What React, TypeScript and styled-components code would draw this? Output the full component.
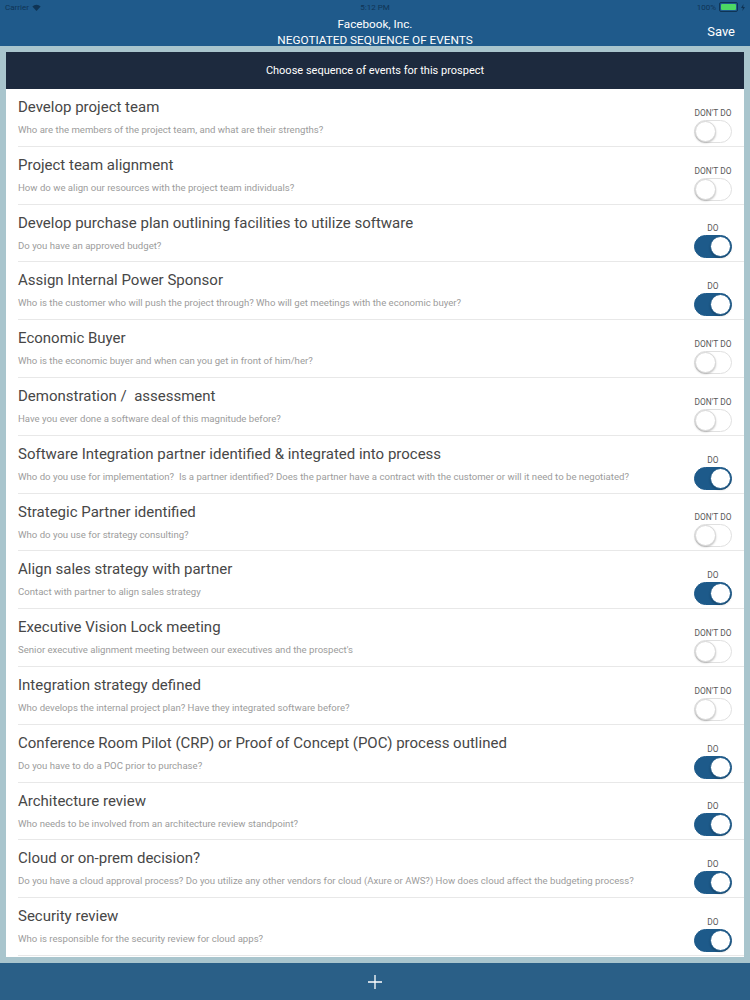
import React, { useState } from 'react';
import styled, { createGlobalStyle } from 'styled-components';

interface IEvent {
  id: number;
  title: string;
  detail: string;
  doIt: boolean;
}

const initialEvents: IEvent[] = [
  { id: 1, title: 'Develop project team', detail: 'Who are the members of the project team, and what are their strengths?', doIt: false },
  { id: 2, title: 'Project team alignment', detail: 'How do we align our resources with the project team individuals?', doIt: false },
  { id: 3, title: 'Develop purchase plan outlining facilities to utilize software', detail: 'Do you have an approved budget?', doIt: true },
  { id: 4, title: 'Assign Internal Power Sponsor', detail: 'Who is the customer who will push the project through? Who will get meetings with the economic buyer?', doIt: true },
  { id: 5, title: 'Economic Buyer', detail: 'Who is the economic buyer and when can you get in front of him/her?', doIt: false },
  { id: 6, title: 'Demonstration /  assessment', detail: 'Have you ever done a software deal of this magnitude before?', doIt: false },
  { id: 7, title: 'Software Integration partner identified & integrated into process', detail: 'Who do you use for implementation?  Is a partner identified? Does the partner have a contract with the customer or will it need to be negotiated?', doIt: true },
  { id: 8, title: 'Strategic Partner identified', detail: 'Who do you use for strategy consulting?', doIt: false },
  { id: 9, title: 'Align sales strategy with partner', detail: 'Contact with partner to align sales strategy', doIt: true },
  { id: 10, title: 'Executive Vision Lock meeting', detail: "Senior executive alignment meeting between our executives and the prospect's", doIt: false },
  { id: 11, title: 'Integration strategy defined', detail: 'Who develops the internal project plan? Have they integrated software before?', doIt: false },
  { id: 12, title: 'Conference Room Pilot (CRP) or Proof of Concept (POC) process outlined', detail: 'Do you have to do a POC prior to purchase?', doIt: true },
  { id: 13, title: 'Architecture review', detail: 'Who needs to be involved from an architecture review standpoint?', doIt: true },
  { id: 14, title: 'Cloud or on-prem decision?', detail: 'Do you have a cloud approval process? Do you utilize any other vendors for cloud (Axure or AWS?) How does cloud affect the budgeting process?', doIt: true },
  { id: 15, title: 'Security review', detail: 'Who is responsible for the security review for cloud apps?', doIt: true },
];

const App = () => {
  const [events, setEvents] = useState<IEvent[]>(initialEvents);

  const toggle = (id: number) => {
    setEvents((old) => old.map((ev) => (ev.id === id ? { ...ev, doIt: !ev.doIt } : ev)));
  };

  return (
    <>
      <GlobalStyle />
      <Page>
        <StatusBar>
          <StatusSide>
            Carrier
            <svg width="9" height="7" viewBox="0 0 12 9">
              <path d="M6 9 L0.5 3 A8 8 0 0 1 11.5 3 Z" fill="#0f3455" />
            </svg>
          </StatusSide>
          <StatusTime>5:12 PM</StatusTime>
          <StatusSide $right>
            100%
            <Battery>
              <BatteryFill />
            </Battery>
            <svg width="4" height="7" viewBox="0 0 4 7">
              <path d="M2.5 0 L0 4 H1.8 L1.4 7 L4 3 H2.2 Z" fill="#0f3455" />
            </svg>
          </StatusSide>
        </StatusBar>
        <NavBar>
          <NavTitle>
            <span>Facebook, Inc.</span>
            <span>NEGOTIATED SEQUENCE OF EVENTS</span>
          </NavTitle>
          <SaveBtn>Save</SaveBtn>
        </NavBar>
        <Frame>
          <Panel>
            <PanelHeader>Choose sequence of events for this prospect</PanelHeader>
            <List>
              {events.map((ev) => (
                <Row key={ev.id}>
                  <RowText>
                    <Title>{ev.title}</Title>
                    <Detail>{ev.detail}</Detail>
                  </RowText>
                  <SwitchCol>
                    <SwitchLabel>{ev.doIt ? 'DO' : "DON'T DO"}</SwitchLabel>
                    <Switch $on={ev.doIt} onClick={() => toggle(ev.id)}>
                      <Knob $on={ev.doIt} />
                    </Switch>
                  </SwitchCol>
                </Row>
              ))}
            </List>
          </Panel>
        </Frame>
        <BottomBar>
          <svg width="14" height="14" viewBox="0 0 14 14">
            <path d="M7 0 V14 M0 7 H14" stroke="#fff" strokeWidth="1.3" />
          </svg>
        </BottomBar>
      </Page>
    </>
  );
};

export default App;

const GlobalStyle = createGlobalStyle`
  html, body {
    margin: 0;
    padding: 0;
  }
  body {
    font-family: Roboto, "Liberation Sans", sans-serif;
  }
`;

const Page = styled.div`
  width: 750px;
  height: 1000px;
  display: flex;
  flex-direction: column;
  background-color: #1f5a8b;
  overflow: hidden;
`;

const StatusBar = styled.div`
  height: 14px;
  display: grid;
  grid-template-columns: 1fr auto 1fr;
  align-items: center;
  padding: 0 5px;
  font-size: 8px;
  color: #0f3455;
`;

const StatusSide = styled.div<{ $right?: boolean }>`
  display: flex;
  align-items: center;
  gap: 3px;
  justify-content: ${(p) => (p.$right ? 'flex-end' : 'flex-start')};
`;

const StatusTime = styled.div``;

const Battery = styled.div`
  width: 15px;
  height: 6px;
  border: 1px solid #0f3455;
  border-radius: 2px;
  padding: 1px;
  display: flex;
`;

const BatteryFill = styled.div`
  flex: 1;
  background-color: #4cd964;
  border-radius: 1px;
`;

const NavBar = styled.div`
  height: 32px;
  display: flex;
  align-items: center;
  justify-content: center;
  position: relative;
  color: #fff;
`;

const NavTitle = styled.div`
  display: flex;
  flex-direction: column;
  align-items: center;
  line-height: 16px;
  font-size: 11.7px;
  padding-top: 4px;
  & span:last-child {
    font-size: 11.8px;
  }
`;

const SaveBtn = styled.button`
  position: absolute;
  right: 15px;
  top: 10px;
  border: none;
  background: none;
  padding: 0;
  color: #fff;
  font-family: inherit;
  font-size: 13px;
`;

const Frame = styled.div`
  flex: 1;
  min-height: 0;
  background-color: #a9c5cd;
  padding: 6px;
  display: flex;
`;

const Panel = styled.div`
  flex: 1;
  background-color: #fff;
  display: flex;
  flex-direction: column;
  overflow: hidden;
`;

const PanelHeader = styled.div`
  height: 37px;
  flex-shrink: 0;
  display: flex;
  align-items: center;
  justify-content: center;
  background-color: #1d2a3e;
  color: #fff;
  font-size: 11px;
`;

const List = styled.ul`
  list-style: none;
  margin: 0;
  padding: 0 0 0 12px;
`;

const Row = styled.li`
  height: 57.8px;
  box-sizing: border-box;
  display: flex;
  align-items: stretch;
  border-bottom: 1px solid #e8e8e8;
`;

const RowText = styled.div`
  flex: 1;
  display: flex;
  flex-direction: column;
  padding-top: 9px;
  white-space: pre;
`;

const Title = styled.div`
  font-size: 15px;
  line-height: 19px;
  color: #474747;
`;

const Detail = styled.div`
  font-size: 9.6px;
  line-height: 12px;
  margin-top: 7px;
  color: #9c9c9c;
`;

const SwitchCol = styled.div`
  padding-right: 12px;
  display: flex;
  flex-direction: column;
  align-items: center;
  justify-content: flex-end;
  padding-bottom: 3px;
`;

const SwitchLabel = styled.div`
  font-size: 8.4px;
  color: #5a5a5a;
  margin-bottom: 2px;
`;

const Switch = styled.div<{ $on: boolean }>`
  width: 38px;
  height: 23px;
  box-sizing: border-box;
  border-radius: 12px;
  border: 1px solid ${(p) => (p.$on ? '#1d5a8a' : '#e0e0e0')};
  background-color: ${(p) => (p.$on ? '#1d5a8a' : '#fff')};
  display: flex;
  align-items: center;
  justify-content: ${(p) => (p.$on ? 'flex-end' : 'flex-start')};
  cursor: pointer;
`;

const Knob = styled.div<{ $on: boolean }>`
  width: 21px;
  height: 21px;
  box-sizing: border-box;
  border-radius: 50%;
  background-color: #fff;
  border: 1px solid ${(p) => (p.$on ? '#1d5a8a' : '#d8d8d8')};
  box-shadow: 0 1px 2px rgba(0, 0, 0, 0.25);
`;

const BottomBar = styled.div`
  height: 37px;
  flex-shrink: 0;
  display: flex;
  align-items: center;
  justify-content: center;
  background-color: #2a5f87;
`;
